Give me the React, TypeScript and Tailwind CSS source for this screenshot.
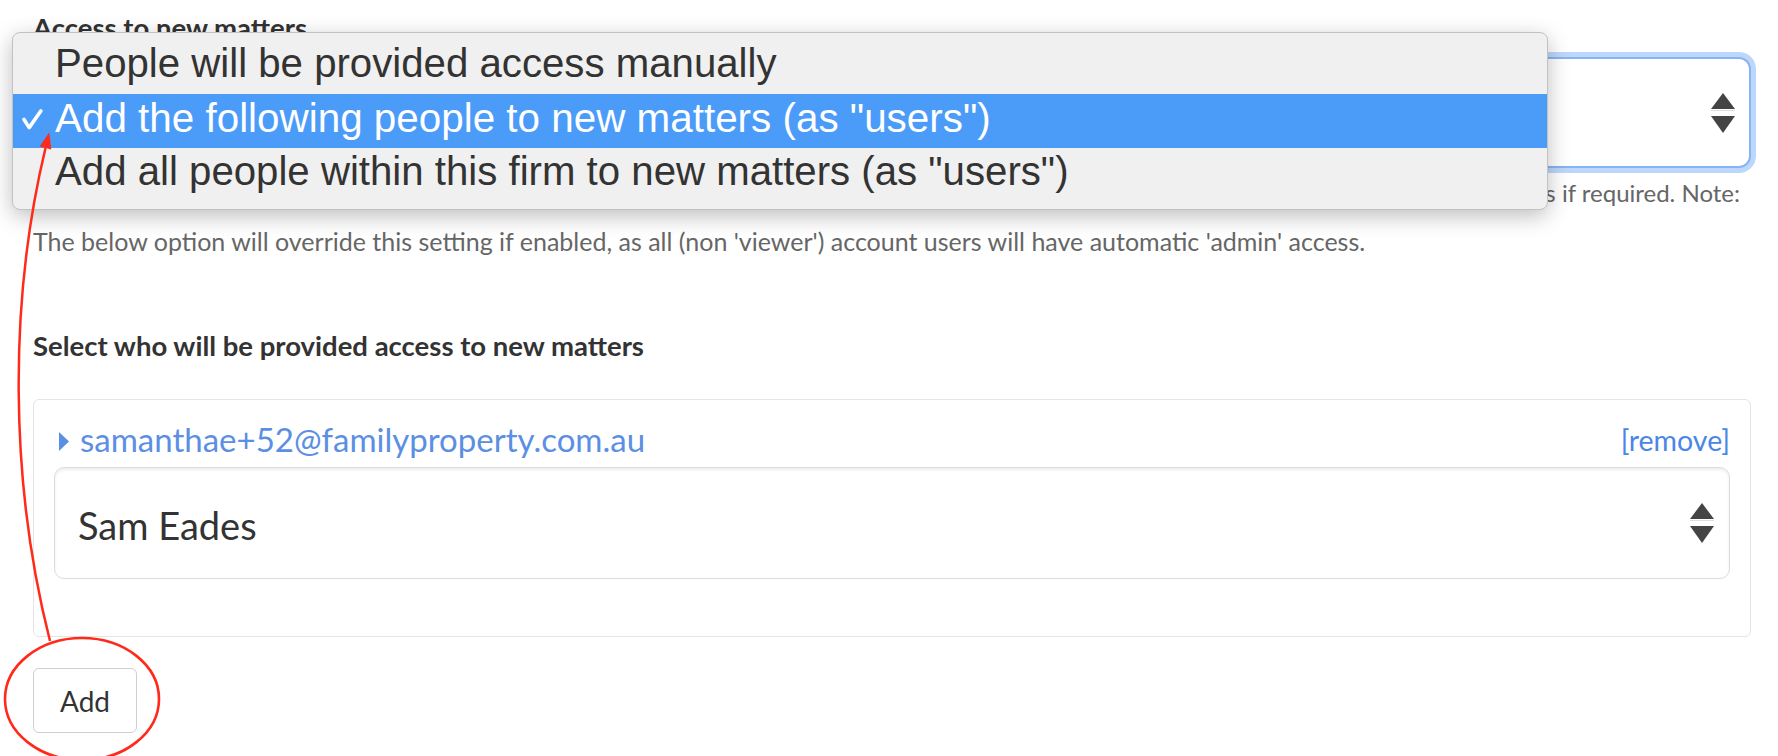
import React from "react";

function Arrows() {
  return (
    <svg width="24" height="40" viewBox="0 0 24 40" className="shrink-0">
      <polygon points="12,0 24,16 0,16" fill="#444444" />
      <line x1="0" y1="17.5" x2="24" y2="17.5" stroke="#dedede" strokeWidth="1" />
      <polygon points="0,23 24,23 12,40" fill="#444444" />
    </svg>
  );
}

function Dropdown() {
  const rows = [
    { label: "People will be provided access manually", selected: false },
    { label: 'Add the following people to new matters (as "users")', selected: true },
    { label: 'Add all people within this firm to new matters (as "users")', selected: false },
  ];
  return (
    <div className="absolute left-[-21px] top-[-25px] z-10 w-[1536px] rounded-[8px] border border-[#c2c2c2] bg-[#f0f0f0] py-[7px] shadow-[0_6px_22px_rgba(0,0,0,0.26)] font-['Liberation_Sans',Arial,sans-serif]">
      {rows.map((r) => (
        <div
          key={r.label}
          className={
            r.selected
              ? "relative h-[54px] pl-[42px] pb-[6px] bg-[#4b9bf9] text-white text-[40.4px] leading-[48px] whitespace-nowrap"
              : "relative h-[54px] pl-[42px] pb-[6px] text-[#333333] text-[40.2px] leading-[48px] whitespace-nowrap"
          }
        >
          {r.selected && (
            <svg width="21" height="21" viewBox="0 0 21 21" className="absolute left-[9px] top-[15px]">
              <path d="M2 10.5 L7.2 18.6 L18.8 2" fill="none" stroke="#ffffff" strokeWidth="3.6" strokeLinecap="round" strokeLinejoin="round" />
            </svg>
          )}
          {r.label}
        </div>
      ))}
    </div>
  );
}

export default function App() {
  return (
    <div className="relative w-[1778px] h-[756px] overflow-hidden bg-white pl-[33px] pr-[27px] font-['Lato',sans-serif]">
      <h3 className="pt-[12px] text-[27.5px] leading-[32px] font-bold text-[#333333]">Access to new matters</h3>

      <div className="relative mt-[13px]">
        <div className="flex h-[111px] items-center justify-between rounded-[12px] border-2 border-[#86b5f5] bg-white pl-[22px] pr-[14px] shadow-[0_0_0_5px_#bdd7fb]">
          <span className="text-[38px] text-[#333333]">Add the following people to new matters (as "users")</span>
          <Arrows />
        </div>
        <Dropdown />
      </div>

      <div className="mt-[1px] text-[25px] leading-[48px] text-[#666666]">
        <div className="whitespace-nowrap pr-[11px] text-right text-[24px]">
          People selected below will be added to each new matter automatically. Access can be changed on individual matters if required. Note:
        </div>
        <div className="whitespace-nowrap">
          The below option will override this setting if enabled, as all (non 'viewer') account users will have automatic 'admin' access.
        </div>
      </div>

      <h3 className="mt-[65px] text-[27.5px] leading-[32px] font-bold text-[#333333]">
        Select who will be provided access to new matters
      </h3>

      <div className="mt-[37px] rounded-[6px] border border-[#e5e5e5] px-[20px] pt-[19px] pb-[57px]">
        <div className="flex h-[40px] items-start justify-between">
          <div className="flex h-[40px] items-center pl-[5px]">
            <svg width="10" height="19" viewBox="0 0 10 19" className="mt-[5px] mr-[11px] shrink-0">
              <polygon points="0,0 10,9.5 0,19" fill="#5b8fe3" />
            </svg>
            <span className="text-[33px] leading-[40px] text-[#5b8fe3]">samanthae+52@familyproperty.com.au</span>
          </div>
          <span className="text-[28.5px] leading-[42px] text-[#4a86e8]">[remove]</span>
        </div>
        <div className="mt-[8px] flex h-[112px] items-center justify-between rounded-[10px] border border-[#dcdcdc] bg-white pl-[23px] pr-[15px] shadow-[inset_0_2px_3px_rgba(0,0,0,0.07)]">
          <span className="pt-[4px] text-[38px] text-[#333333]">Sam Eades</span>
          <Arrows />
        </div>
      </div>

      <button className="mt-[31px] flex h-[65px] w-[104px] items-center justify-center rounded-[6px] border border-[#cfcfcf] bg-white text-[28px] text-[#333333]">
        Add
      </button>

      <svg width="1778" height="756" viewBox="0 0 1778 756" className="pointer-events-none absolute left-0 top-0 z-20">
        <ellipse cx="82" cy="699" rx="77" ry="61" fill="none" stroke="#ff2a1a" strokeWidth="2.6" />
        <path d="M50 641 C9 480, 9 300, 45.5 148" fill="none" stroke="#ff2a1a" strokeWidth="2.5" />
        <polygon points="49.2,132.4 51.3,149.4 39.7,146.6" fill="#ff2a1a" />
      </svg>
    </div>
  );
}
